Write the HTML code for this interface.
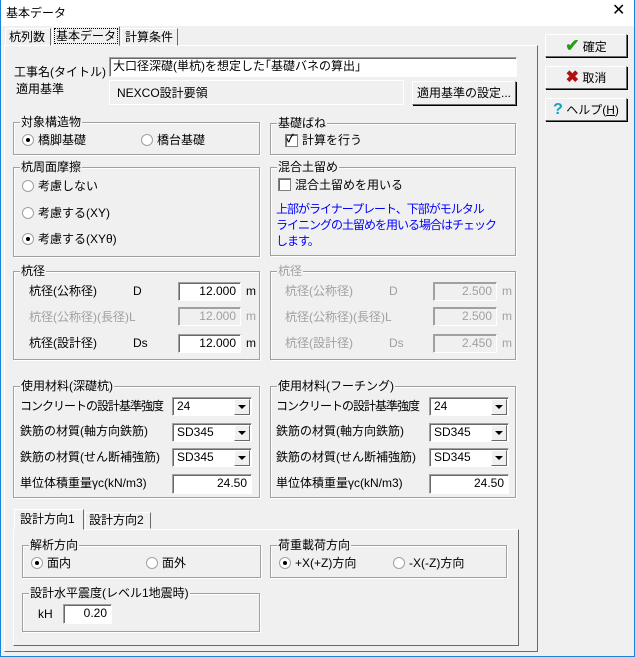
<!DOCTYPE html>
<html><head><meta charset="utf-8"><style>
*{box-sizing:border-box;margin:0;padding:0}
body{width:635px;height:657px;background:#f0f0f0;font-family:"Liberation Sans","Noto Sans CJK JP",sans-serif;font-size:12px;color:#000;position:relative;overflow:hidden}
.a{position:absolute;white-space:nowrap;line-height:14px}
.win{position:absolute;left:0;top:0;width:635px;height:657px;border:1px solid #1883d7;border-top:none}
.title{position:absolute;left:0;top:0;width:635px;height:26px;background:#fff}
.g{position:absolute;border:1px solid #a0a0a0;box-shadow:inset 1px 1px #fff,1px 1px #fff}
.gl{position:absolute;top:-8px;left:6px;background:#f0f0f0;padding:0 1px;line-height:14px}
.in{position:absolute;background:#fff;border:1px solid;border-color:#a0a0a0 #fff #fff #a0a0a0;box-shadow:inset 1px 1px #696969;text-align:right;padding-right:4px;line-height:17px}
.dis{color:#a0a0a0}
.in.dis{background:#f0f0f0;box-shadow:inset 1px 1px #a0a0a0}
.cb{position:absolute;background:#fff;border:1px solid;border-color:#a0a0a0 #fff #fff #a0a0a0;box-shadow:inset 1px 1px #696969;padding-left:4px;line-height:17px}
.cb i{position:absolute;right:1px;top:1px;width:16px;height:16px;background:#f0f0f0;border:1px solid;border-color:#fff #696969 #696969 #fff}
.cb i:after{content:"";position:absolute;left:3px;top:5px;border:4px solid transparent;border-top:4px solid #000;border-bottom:0}
.btn{position:absolute;background:#f0f0f0;border:1px solid;border-color:#fff #696969 #696969 #fff;box-shadow:1px 1px #000;text-align:center}
.rd{position:absolute;width:12px;height:12px;border-radius:50%;background:#fff;border:1px solid #a0a0a0}
.rd.on:after{content:"";position:absolute;left:3px;top:3px;width:4px;height:4px;border-radius:50%;background:#000}
.ck{position:absolute;width:13px;height:13px;background:#fff;border:1px solid #808080;box-shadow:inset 1px 1px #696969}
.n{letter-spacing:-1px}
</style></head><body>
<div class="title"></div>
<div class="a" style="left:6px;top:6px">基本データ</div>
<div class="a" style="left:612px;top:4px;font-size:16px">✕</div>
<div class="win"></div>

<div style="position:absolute;left:4px;top:45px;width:534px;height:607px;border:1px solid;border-color:#fff #696969 #696969 #fff"></div>
<div class="a" style="left:5px;top:28px;width:46px;height:18px;border:1px solid;border-color:#fff #696969 transparent #fff;padding-left:3px;line-height:16px">杭列数</div>
<div class="a" style="left:52px;top:26px;width:68px;height:20px;border:1px solid;border-color:#fff #696969 transparent #fff;background:#f0f0f0;padding:1px 2px;line-height:16px"><span style="outline:1px dotted #000;padding:0 1px">基本データ</span></div>
<div class="a" style="left:121px;top:28px;width:57px;height:18px;border:1px solid;border-color:#fff #696969 transparent #fff;padding-left:3px;line-height:16px">計算条件</div>

<div class="btn" style="left:545px;top:34px;width:82px;height:23px;line-height:21px"><span style="color:#2a9a1a;font-size:17px;font-weight:bold">✔</span> 確定</div>
<div class="btn" style="left:545px;top:66px;width:82px;height:23px;line-height:21px"><span style="color:#b01010;font-size:16px;font-weight:bold">✖</span> 取消</div>
<div class="btn" style="left:545px;top:98px;width:82px;height:23px;line-height:21px"><span style="color:#1aa0c0;font-size:16px;font-weight:bold">?</span> ヘルプ(<u>H</u>)</div>

<div class="a" style="left:14px;top:65px">工事名(タイトル)</div>
<div class="in" style="left:109px;top:57px;width:408px;height:20px;text-align:left;padding-left:3px">大口径深礎(単杭)を想定した｢基礎バネの算出｣</div>
<div class="a" style="left:16px;top:82px">適用基準</div>
<div style="position:absolute;left:109px;top:80px;width:295px;height:25px;border:1px solid;border-color:#fff #fff #fff #fff"></div>
<div class="a" style="left:117px;top:86px">NEXCO設計要領</div>
<div class="btn" style="left:412px;top:81px;width:104px;height:24px;line-height:22px">適用基準の設定...</div>

<div class="g" style="left:13px;top:122px;width:247px;height:33px"><span class="gl">対象構造物</span></div>
<div class="rd on" style="left:22px;top:134px"></div><div class="a" style="left:38px;top:133px">橋脚基礎</div>
<div class="rd" style="left:141px;top:134px"></div><div class="a" style="left:157px;top:133px">橋台基礎</div>
<div class="g" style="left:270px;top:123px;width:246px;height:32px"><span class="gl">基礎ばね</span></div>
<div class="ck" style="left:285px;top:134px"></div><div class="a" style="left:286px;top:132px;font-size:11px;font-weight:bold">✓</div><div class="a" style="left:302px;top:133px">計算を行う</div>

<div class="g" style="left:13px;top:167px;width:247px;height:90px"><span class="gl">杭周面摩擦</span></div>
<div class="rd" style="left:22px;top:180px"></div><div class="a" style="left:38px;top:179px">考慮しない</div>
<div class="rd" style="left:22px;top:207px"></div><div class="a" style="left:38px;top:206px">考慮する(XY)</div>
<div class="rd on" style="left:22px;top:233px"></div><div class="a" style="left:38px;top:232px">考慮する(XYθ)</div>
<div class="g" style="left:270px;top:167px;width:246px;height:89px"><span class="gl">混合土留め</span></div>
<div class="ck" style="left:278px;top:178px"></div><div class="a" style="left:295px;top:178px">混合土留めを用いる</div>
<div class="a n" style="left:276px;top:201px;color:#0000ff;line-height:16px">上部がライナープレート、下部がモルタル<br>ライニングの土留めを用いる場合はチェック<br>します。</div>

<div class="g" style="left:13px;top:271px;width:247px;height:89px"><span class="gl">杭径</span></div>
<div class="a" style="left:29px;top:284px">杭径(公称径)</div><div class="a" style="left:133px;top:284px">D</div>
<div class="in" style="left:178px;top:282px;width:63px;height:19px">12.000</div><div class="a" style="left:246px;top:284px">m</div>
<div class="a dis" style="left:29px;top:310px">杭径(公称径)(長径)L</div>
<div class="in dis" style="left:178px;top:307px;width:63px;height:19px">12.000</div><div class="a dis" style="left:246px;top:309px">m</div>
<div class="a" style="left:29px;top:336px">杭径(設計径)</div><div class="a" style="left:133px;top:336px">Ds</div>
<div class="in" style="left:178px;top:334px;width:63px;height:19px">12.000</div><div class="a" style="left:246px;top:336px">m</div>

<div class="g" style="left:270px;top:271px;width:246px;height:89px"><span class="gl dis">杭径</span></div>
<div class="a dis" style="left:285px;top:284px">杭径(公称径)</div><div class="a dis" style="left:389px;top:284px">D</div>
<div class="in dis" style="left:433px;top:282px;width:64px;height:19px">2.500</div><div class="a dis" style="left:502px;top:284px">m</div>
<div class="a dis" style="left:285px;top:310px">杭径(公称径)(長径)L</div>
<div class="in dis" style="left:433px;top:307px;width:64px;height:19px">2.500</div><div class="a dis" style="left:502px;top:309px">m</div>
<div class="a dis" style="left:285px;top:336px">杭径(設計径)</div><div class="a dis" style="left:389px;top:336px">Ds</div>
<div class="in dis" style="left:433px;top:334px;width:64px;height:19px">2.450</div><div class="a dis" style="left:502px;top:336px">m</div>

<div class="g" style="left:13px;top:386px;width:247px;height:112px"><span class="gl">使用材料(深礎杭)</span></div>
<div class="a n" style="left:20px;top:399px">コンクリートの設計基準強度</div><div class="cb" style="left:172px;top:397px;width:80px;height:19px">24<i></i></div>
<div class="a" style="left:20px;top:424px">鉄筋の材質(軸方向鉄筋)</div><div class="cb" style="left:172px;top:423px;width:80px;height:19px">SD345<i></i></div>
<div class="a" style="left:20px;top:450px">鉄筋の材質(せん断補強筋)</div><div class="cb" style="left:172px;top:448px;width:80px;height:19px">SD345<i></i></div>
<div class="a" style="left:20px;top:476px">単位体積重量γc(kN/m3)</div><div class="in" style="left:172px;top:474px;width:80px;height:20px">24.50</div>

<div class="g" style="left:270px;top:386px;width:246px;height:112px"><span class="gl">使用材料(フーチング)</span></div>
<div class="a n" style="left:276px;top:399px">コンクリートの設計基準強度</div><div class="cb" style="left:429px;top:397px;width:80px;height:19px">24<i></i></div>
<div class="a" style="left:276px;top:424px">鉄筋の材質(軸方向鉄筋)</div><div class="cb" style="left:429px;top:423px;width:80px;height:19px">SD345<i></i></div>
<div class="a" style="left:276px;top:450px">鉄筋の材質(せん断補強筋)</div><div class="cb" style="left:429px;top:448px;width:80px;height:19px">SD345<i></i></div>
<div class="a" style="left:276px;top:476px">単位体積重量γc(kN/m3)</div><div class="in" style="left:429px;top:474px;width:80px;height:20px">24.50</div>

<div style="position:absolute;left:13px;top:529px;width:506px;height:117px;border:1px solid;border-color:#fff #696969 #696969 #fff"></div>
<div class="a" style="left:14px;top:509px;width:70px;height:21px;border:1px solid;border-color:#fff #696969 transparent #fff;background:#f0f0f0;padding:2px 5px">設計方向1</div>
<div class="a" style="left:85px;top:512px;width:66px;height:17px;border:1px solid;border-color:#fff #696969 transparent #fff;padding:0 3px">設計方向2</div>

<div class="g" style="left:22px;top:545px;width:239px;height:33px"><span class="gl">解析方向</span></div>
<div class="rd on" style="left:31px;top:557px"></div><div class="a" style="left:47px;top:556px">面内</div>
<div class="rd" style="left:146px;top:557px"></div><div class="a" style="left:162px;top:556px">面外</div>
<div class="g" style="left:270px;top:545px;width:237px;height:33px"><span class="gl">荷重載荷方向</span></div>
<div class="rd on" style="left:279px;top:557px"></div><div class="a" style="left:295px;top:556px">+X(+Z)方向</div>
<div class="rd" style="left:393px;top:557px"></div><div class="a" style="left:409px;top:556px">-X(-Z)方向</div>
<div class="g" style="left:22px;top:593px;width:238px;height:39px"><span class="gl">設計水平震度(レベル1地震時)</span></div>
<div class="a" style="left:38px;top:607px">kH</div>
<div class="in" style="left:63px;top:604px;width:49px;height:20px">0.20</div>
</body></html>
